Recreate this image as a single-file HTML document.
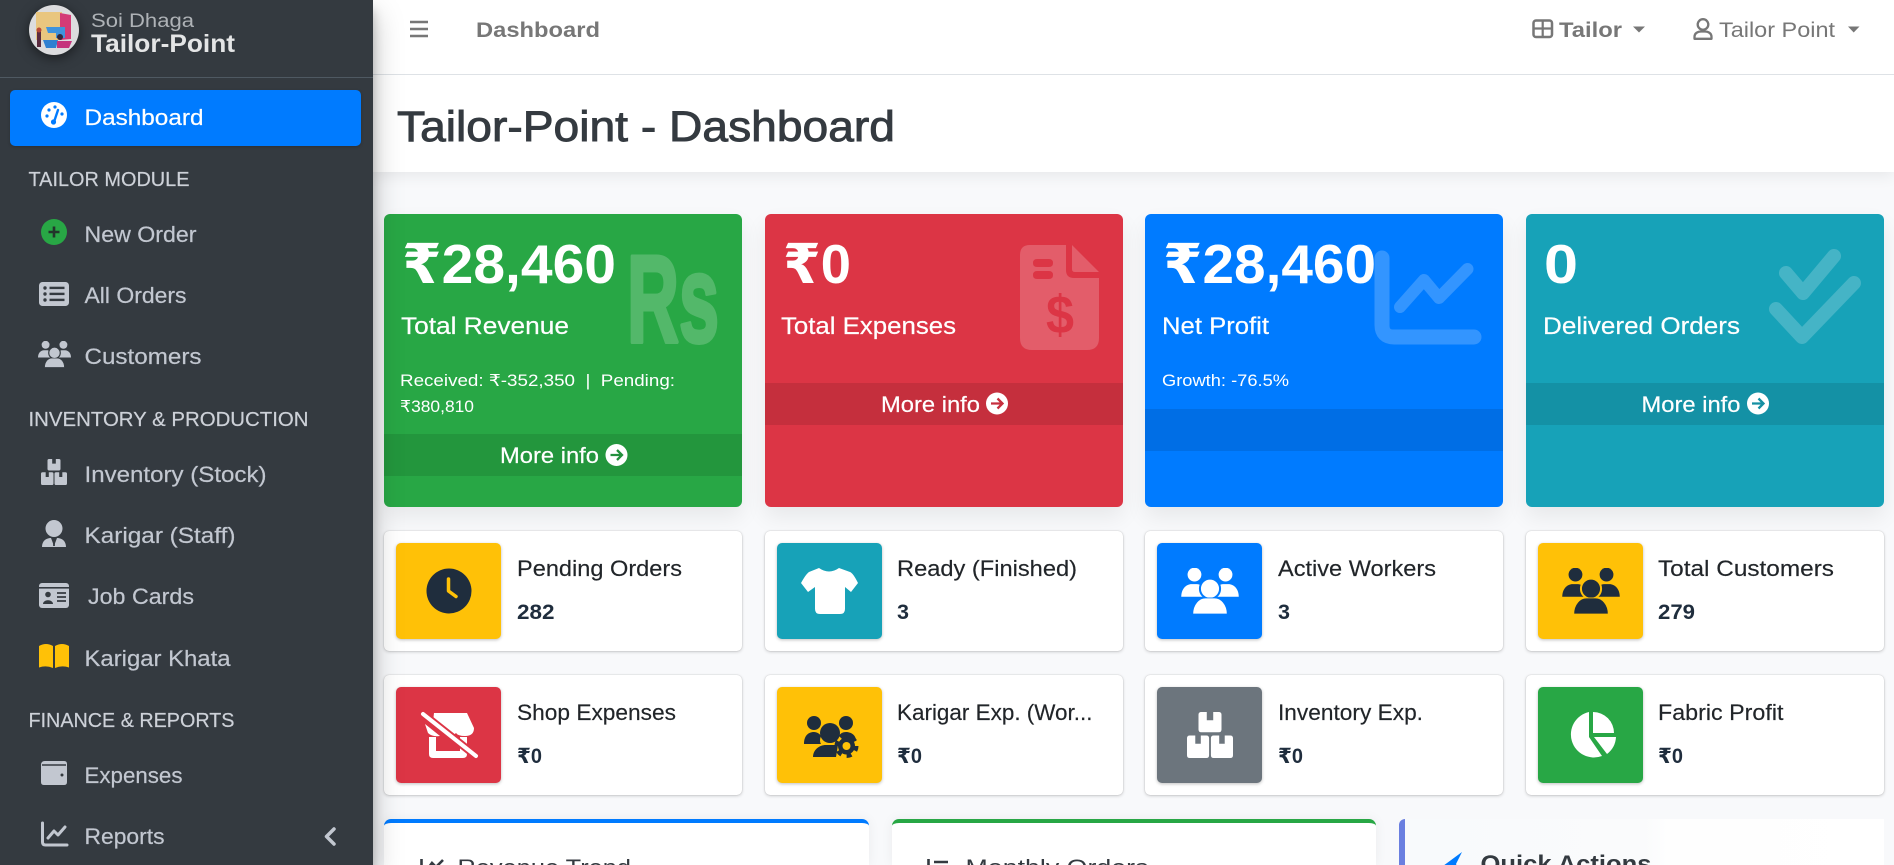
<!DOCTYPE html>
<html lang="en">
<head>
<meta charset="utf-8">
<title>Tailor-Point - Dashboard</title>
<style>
html,body{margin:0;padding:0;width:1894px;height:865px;overflow:hidden;background:#f8f9fb;font-family:"Liberation Sans",sans-serif}
#app{position:relative;width:1894px;height:865px;overflow:hidden;background:#f8f9fb}
.abs{position:absolute}
#side{left:0;top:0;width:373px;height:865px;background:#343a40;box-shadow:0 14px 28px rgba(0,0,0,.25),0 10px 10px rgba(0,0,0,.22);z-index:3}
#side .line{position:absolute;left:0;top:77px;width:373px;height:1px;background:#4f5962}
#side .active{position:absolute;left:10px;top:90px;width:351px;height:56px;border-radius:5px;background:#007bff;box-shadow:0 1px 3px rgba(0,0,0,.2)}
#nav{left:373px;top:0;width:1521px;height:74px;background:#fff;border-bottom:1px solid #dee2e6;z-index:2}
#head{left:373px;top:75px;width:1521px;height:97px;background:#fff;box-shadow:0 4px 14px rgba(0,0,0,.07);z-index:1}
.card{top:214px;height:293px;width:358px;border-radius:6px;box-shadow:0 10px 22px rgba(0,0,0,.07);overflow:hidden}
.band{position:absolute;left:0;width:100%;height:42px;background:rgba(0,0,0,.1)}
.info{width:358px;height:120px;background:#fff;border-radius:5px;box-shadow:0 0 1px rgba(0,0,0,.25),0 1px 3px rgba(0,0,0,.18)}
.tile{width:105px;height:96px;border-radius:5px;box-shadow:0 1px 3px rgba(0,0,0,.25)}
.panel{top:819px;height:42px;background:#fff;border-radius:7px 7px 0 0;box-shadow:0 0 12px rgba(0,0,0,.06)}
#over{position:absolute;left:0;top:0;z-index:5}
text{font-family:"Liberation Sans","DejaVu Sans",sans-serif}
.s{font-size:22px;fill:#c2c7d0;stroke:#c2c7d0;stroke-width:.2}
.h{font-size:20.5px;fill:#cdd1d8;stroke:#cdd1d8;stroke-width:.2}
.val{font-size:55px;font-weight:700;fill:#fff}
.ttl{font-size:24px;fill:#fff;stroke:#fff;stroke-width:.2}
.sm{font-size:16.5px;fill:#fff}
.mi{font-size:22px;fill:#fff;stroke:#fff;stroke-width:.2}
.lab{font-size:22px;fill:#212529;stroke:#212529;stroke-width:.15}
.num{font-size:21px;font-weight:700;fill:#1f2d3d}
.n{font-size:21.5px;fill:#777}
</style>
</head>
<body>
<div id="app">
<aside id="side" class="abs"><div class="line"></div><div class="active"></div></aside>
<header id="nav" class="abs"></header>
<div id="head" class="abs"></div>

<div class="abs card" style="left:384px;background:#28a745"><div class="band" style="top:220px"></div></div>
<div class="abs card" style="left:765px;background:#dc3545"><div class="band" style="top:169px"></div></div>
<div class="abs card" style="left:1145px;background:#007bff"><div class="band" style="top:195px"></div></div>
<div class="abs card" style="left:1526px;background:#17a2b8"><div class="band" style="top:169px"></div></div>

<div class="abs info" style="left:384px;top:531px"></div>
<div class="abs info" style="left:765px;top:531px"></div>
<div class="abs info" style="left:1145px;top:531px"></div>
<div class="abs info" style="left:1526px;top:531px"></div>
<div class="abs info" style="left:384px;top:675px"></div>
<div class="abs info" style="left:765px;top:675px"></div>
<div class="abs info" style="left:1145px;top:675px"></div>
<div class="abs info" style="left:1526px;top:675px"></div>

<div class="abs tile" style="left:396px;top:543px;background:#ffc107"></div>
<div class="abs tile" style="left:777px;top:543px;background:#17a2b8"></div>
<div class="abs tile" style="left:1157px;top:543px;background:#007bff"></div>
<div class="abs tile" style="left:1538px;top:543px;background:#ffc107"></div>
<div class="abs tile" style="left:396px;top:687px;background:#dc3545"></div>
<div class="abs tile" style="left:777px;top:687px;background:#ffc107"></div>
<div class="abs tile" style="left:1157px;top:687px;background:#6c757d"></div>
<div class="abs tile" style="left:1538px;top:687px;background:#28a745"></div>

<div class="abs panel" style="left:384px;width:485px;border-top:4px solid #007bff"></div>
<div class="abs panel" style="left:892px;width:484px;border-top:4px solid #28a745"></div>
<div class="abs panel" style="left:1399px;width:479px;height:46px;border-left:6px solid #6a7fe0;border-radius:6px 0 0 0;background:linear-gradient(90deg,#f8fafc 0%,#fafbfc 50%,#fefefe 55%,#fff 100%);box-shadow:none"></div>

<svg id="over" width="1894" height="865" viewBox="0 0 1894 865" xmlns="http://www.w3.org/2000/svg">
<defs>
<symbol id="users" viewBox="0 0 100 80">
  <circle cx="23" cy="11.500" r="12"/><circle cx="77" cy="11.500" r="12"/>
  <path d="M0 50C0 36 9 28 18 28H27C33 28 37 32 38 38V50Z"/><path d="M62 50V38C63 32 67 28 73 28H82C91 28 100 36 100 50Z"/>
  <circle cx="50" cy="36" r="17.500" style="stroke:var(--g);stroke-width:3.500"/>
  <path d="M20 80C20 63 31 52 42 52H58C69 52 80 63 80 80Z" style="stroke:var(--g);stroke-width:1.500"/>
</symbol>
<symbol id="boxes" viewBox="0 0 100 100">
  <path fill-rule="evenodd" d="M31 0H43V18H57V0H69Q75 0 75 6V38Q75 44 69 44H31Q25 44 25 38V6Q25 0 31 0Z"/>
  <path fill-rule="evenodd" d="M6 51H18V69H30V51H42Q48 51 48 57V94Q48 100 42 100H6Q0 100 0 94V57Q0 51 6 51Z"/>
  <path fill-rule="evenodd" d="M58 51H70V69H82V51H94Q100 51 100 57V94Q100 100 94 100H58Q52 100 52 94V57Q52 51 58 51Z"/>
</symbol>
</defs>

<!-- Sidebar brand -->
<circle cx="54" cy="30" r="25" fill="#dcdcde" style="filter:drop-shadow(0 3px 6px rgba(0,0,0,.5))"/>
<rect x="36" y="12" width="26" height="28" fill="#e9c67f"/>
<path d="M60 13L71 15V39L60 40Z" fill="#d43a76"/>
<path d="M46 27H65V38H56V33H48Z" fill="#3f93dc"/>
<path d="M43 40H58L56 48H46Z" fill="#2f80d2"/>
<path d="M57 41H72L69 48H57Z" fill="#c5347c"/>
<rect x="37" y="31" width="4" height="16" fill="#5b2b3f"/>
<circle cx="39" cy="30" r="2.500" fill="#b84a38"/>
<circle cx="60" cy="37" r="3" fill="#34283c"/>
<text x="91" y="27" font-size="19" fill="#aeb2b6" textLength="103" lengthAdjust="spacingAndGlyphs">Soi Dhaga</text>
<text x="91" y="52" font-size="25" font-weight="700" fill="#e4e5e6" textLength="144" lengthAdjust="spacingAndGlyphs">Tailor-Point</text>

<!-- Dashboard item -->
<circle cx="54" cy="115" r="13" fill="#fff"/>
<g fill="#007bff"><circle cx="47" cy="116" r="1.600"/><circle cx="49" cy="110" r="1.600"/><circle cx="55" cy="107" r="1.600"/><circle cx="62" cy="114" r="1.600"/></g>
<path d="M54 122L58 110" stroke="#007bff" stroke-width="2.400" stroke-linecap="round"/><circle cx="53.500" cy="122" r="2.600" fill="#007bff"/>
<text x="84.500" y="125" font-size="22" fill="#fff" stroke="#fff" stroke-width=".2" textLength="119" lengthAdjust="spacingAndGlyphs">Dashboard</text>

<text x="28.500" y="186" class="h" textLength="161" lengthAdjust="spacingAndGlyphs">TAILOR MODULE</text>
<circle cx="54" cy="232" r="13" fill="#28a745"/><path d="M54 226.500V237.500M48.500 232H59.500" stroke="#23352b" stroke-width="2.600"/>
<text x="84.500" y="242" class="s" textLength="112" lengthAdjust="spacingAndGlyphs">New Order</text>

<rect x="39" y="282" width="30" height="24" rx="3.500" fill="#c2c7d0"/>
<g fill="#343a40"><circle cx="45" cy="288" r="1.700"/><circle cx="45" cy="294" r="1.700"/><circle cx="45" cy="300" r="1.700"/><rect x="49.500" y="286.700" width="15" height="2.400"/><rect x="49.500" y="292.700" width="15" height="2.400"/><rect x="49.500" y="298.700" width="15" height="2.400"/></g>
<text x="84.500" y="303" class="s" textLength="102" lengthAdjust="spacingAndGlyphs">All Orders</text>

<use href="#users" x="38" y="341" width="33" height="26.400" fill="#c2c7d0" style="--g:#343a40"/>
<text x="84.500" y="364" class="s" textLength="117" lengthAdjust="spacingAndGlyphs">Customers</text>

<text x="28.500" y="426" class="h" textLength="280" lengthAdjust="spacingAndGlyphs">INVENTORY &amp; PRODUCTION</text>
<use href="#boxes" x="39" y="459" width="30" height="26" preserveAspectRatio="none" fill="#c2c7d0"/>
<text x="84.500" y="482" class="s" textLength="182" lengthAdjust="spacingAndGlyphs">Inventory (Stock)</text>

<circle cx="54" cy="528.500" r="8.500" fill="#c2c7d0"/>
<path d="M42 547C42 541 46 538 51 538L54 546L57 538C62 538 66 541 66 547Z" fill="#c2c7d0"/>
<path d="M54 539V546" stroke="#343a40" stroke-width="1.800"/>
<text x="84.500" y="543" class="s" textLength="151" lengthAdjust="spacingAndGlyphs">Karigar (Staff)</text>

<rect x="39" y="583" width="30" height="25" rx="3" fill="#c2c7d0"/>
<rect x="39" y="587" width="30" height="1.600" fill="#343a40"/>
<circle cx="48" cy="594.500" r="2.800" fill="#343a40"/><path d="M43 604C43 599 53 599 53 604Z" fill="#343a40"/>
<path d="M57 593H66M57 597H66M57 601H66" stroke="#343a40" stroke-width="1.800"/>
<text x="88" y="604" class="s" textLength="106" lengthAdjust="spacingAndGlyphs">Job Cards</text>

<path d="M39 646Q46 642 53 646V668Q46 665 39 667.500Z" fill="#ffc107"/><path d="M55 646Q62 642 69 646V667.500Q62 665 55 668Z" fill="#ffc107"/>
<text x="84.500" y="666" class="s" textLength="146" lengthAdjust="spacingAndGlyphs">Karigar Khata</text>

<text x="28.500" y="727" class="h" textLength="206" lengthAdjust="spacingAndGlyphs">FINANCE &amp; REPORTS</text>
<path d="M45 761H64Q67 761 67 764V782Q67 785 64 785H44Q41 785 41 782V765Q41 761 45 761Z" fill="#c2c7d0"/>
<path d="M42 765H66" stroke="#343a40" stroke-width="1.500"/><circle cx="62" cy="775" r="1.500" fill="#343a40"/>
<text x="84.500" y="783" class="s" textLength="98" lengthAdjust="spacingAndGlyphs">Expenses</text>

<path d="M42.500 823V842Q42.500 845 45.500 845H67" fill="none" stroke="#c2c7d0" stroke-width="3" stroke-linecap="round"/>
<path d="M48 838L54 831L58 835L65 827" fill="none" stroke="#c2c7d0" stroke-width="3" stroke-linecap="round" stroke-linejoin="round"/>
<text x="84.500" y="844" class="s" textLength="80" lengthAdjust="spacingAndGlyphs">Reports</text>
<path d="M334 829L326.500 836.500L334 844" fill="none" stroke="#c2c7d0" stroke-width="3.500" stroke-linecap="round" stroke-linejoin="round"/>

<!-- Navbar -->
<path d="M410 22H428M410 29H428M410 36H428" stroke="#777" stroke-width="2.600"/>
<text x="476" y="37" font-size="21.500" font-weight="700" fill="#777" textLength="124" lengthAdjust="spacingAndGlyphs">Dashboard</text>
<rect x="1533.500" y="20.500" width="18.500" height="16.500" rx="2.500" fill="none" stroke="#777" stroke-width="2.500"/>
<path d="M1533 28.500H1552M1542.700 20V37" stroke="#777" stroke-width="2.200"/>
<text x="1559" y="37" font-size="21.500" font-weight="700" fill="#777" textLength="63" lengthAdjust="spacingAndGlyphs">Tailor</text>
<path d="M1633 26.500H1645L1639 32.500Z" fill="#777"/>
<circle cx="1703" cy="24.500" r="5.300" fill="none" stroke="#777" stroke-width="2.300"/>
<path d="M1694.500 38.800V37C1694.500 33 1698 31.500 1701 31.500H1705C1708 31.500 1711.500 33 1711.500 37V38.800Z" fill="none" stroke="#777" stroke-width="2.300" stroke-linejoin="round"/>
<text x="1719" y="37" class="n" textLength="116" lengthAdjust="spacingAndGlyphs">Tailor Point</text>
<path d="M1848 26.500H1859.500L1853.700 32.500Z" fill="#777"/>

<text x="397" y="141" font-size="43" fill="#343a40" stroke="#343a40" stroke-width=".9" textLength="498" lengthAdjust="spacingAndGlyphs">Tailor-Point - Dashboard</text>

<!-- Card watermark icons -->
<g opacity=".2"><text x="627" y="342" font-size="124" font-weight="700" fill="#fff" stroke="#fff" stroke-width="4" stroke-linejoin="round" textLength="92" lengthAdjust="spacingAndGlyphs">Rs</text></g>
<path fill="#fff" fill-opacity=".2" fill-rule="evenodd" d="M1030 245H1066V270Q1066 278 1074 278H1099V338Q1099 350 1087 350H1032Q1020 350 1020 338V255Q1020 245 1030 245ZM1037 259Q1033 259 1033 263Q1033 267 1037 267H1049Q1053 267 1053 263Q1053 259 1049 259ZM1037 271Q1033 271 1033 275Q1033 279 1037 279H1049Q1053 279 1053 275Q1053 271 1049 271Z"/>
<path fill="#fff" fill-opacity=".2" d="M1072 245L1099 272H1075Q1072 272 1072 269Z"/>
<text x="1060" y="333" font-size="54" font-weight="700" fill="#dc3545" text-anchor="middle" textLength="28" lengthAdjust="spacingAndGlyphs">$</text>
<path d="M1382 258V325Q1382 337 1394 337H1474" fill="none" stroke="#fff" stroke-opacity=".2" stroke-width="15" stroke-linecap="round"/>
<path d="M1400 307L1424 280L1439 298L1467.500 269" fill="none" stroke="#fff" stroke-opacity=".2" stroke-width="12" stroke-linecap="round" stroke-linejoin="round"/>
<path d="M1786 273L1803 293L1834 256" fill="none" stroke="#fff" stroke-opacity=".2" stroke-width="14" stroke-linecap="round" stroke-linejoin="round"/>
<path d="M1776 309L1802 337L1854 283" fill="none" stroke="#fff" stroke-opacity=".2" stroke-width="14" stroke-linecap="round" stroke-linejoin="round"/>

<!-- Card text -->
<text x="402" y="283" class="val" textLength="214" lengthAdjust="spacingAndGlyphs">₹28,460</text>
<text x="401" y="334" class="ttl" textLength="168" lengthAdjust="spacingAndGlyphs">Total Revenue</text>
<text x="400" y="386" class="sm" textLength="275" lengthAdjust="spacingAndGlyphs">Received: ₹-352,350 &#160;|&#160; Pending:</text>
<text x="400" y="412" class="sm" textLength="74" lengthAdjust="spacingAndGlyphs">₹380,810</text>
<text x="500" y="463" class="mi" textLength="99" lengthAdjust="spacingAndGlyphs">More info</text>
<circle cx="616.500" cy="455" r="11" fill="#fff"/>
<path d="M610.500 455H621.500M617 450L622 455L617 460" fill="none" stroke="#23903d" stroke-width="2.300"/>

<text x="783" y="283" class="val" textLength="68" lengthAdjust="spacingAndGlyphs">₹0</text>
<text x="781" y="334" class="ttl" textLength="175" lengthAdjust="spacingAndGlyphs">Total Expenses</text>
<text x="881" y="412" class="mi" textLength="99" lengthAdjust="spacingAndGlyphs">More info</text>
<circle cx="997" cy="403.500" r="11" fill="#fff"/>
<path d="M991 403.500H1002M997.500 398.500L1002.500 403.500L997.500 408.500" fill="none" stroke="#c62f3e" stroke-width="2.300"/>

<text x="1163" y="283" class="val" textLength="213" lengthAdjust="spacingAndGlyphs">₹28,460</text>
<text x="1162" y="334" class="ttl" textLength="107" lengthAdjust="spacingAndGlyphs">Net Profit</text>
<text x="1162" y="386" class="sm" textLength="127" lengthAdjust="spacingAndGlyphs">Growth: -76.5%</text>

<text x="1544" y="283" class="val" textLength="34" lengthAdjust="spacingAndGlyphs">0</text>
<text x="1543" y="334" class="ttl" textLength="197" lengthAdjust="spacingAndGlyphs">Delivered Orders</text>
<text x="1641.500" y="412" class="mi" textLength="99" lengthAdjust="spacingAndGlyphs">More info</text>
<circle cx="1758" cy="403.500" r="11" fill="#fff"/>
<path d="M1752 403.500H1763M1758.500 398.500L1763.500 403.500L1758.500 408.500" fill="none" stroke="#158fa2" stroke-width="2.300"/>

<!-- Info icons row 1 -->
<circle cx="449" cy="591" r="22.500" fill="#1f2d3d"/>
<path d="M448.500 579V591L456 596.500" fill="none" stroke="#ffc107" stroke-width="3.500" stroke-linecap="round" stroke-linejoin="round"/>
<path fill="#fff" d="M819 568Q829 575 839 568L850 572Q853 573 858 583L851 592L845 587V609Q845 614 840 614H820Q815 614 815 609V587L808 592L801 583Q806 574 809 572Z"/>
<use href="#users" x="1181" y="568" width="58" height="46" fill="#fff" style="--g:#007bff"/>
<use href="#users" x="1562" y="568" width="58" height="46" fill="#1f2d3d" style="--g:#ffc107"/>

<text x="517" y="576" class="lab" textLength="165" lengthAdjust="spacingAndGlyphs">Pending Orders</text>
<text x="517" y="619" class="num" textLength="37.500" lengthAdjust="spacingAndGlyphs">282</text>
<text x="897" y="576" class="lab" textLength="180" lengthAdjust="spacingAndGlyphs">Ready (Finished)</text>
<text x="897" y="619" class="num" textLength="12" lengthAdjust="spacingAndGlyphs">3</text>
<text x="1278" y="576" class="lab" textLength="158" lengthAdjust="spacingAndGlyphs">Active Workers</text>
<text x="1278" y="619" class="num" textLength="12" lengthAdjust="spacingAndGlyphs">3</text>
<text x="1658" y="576" class="lab" textLength="176" lengthAdjust="spacingAndGlyphs">Total Customers</text>
<text x="1658" y="619" class="num" textLength="37" lengthAdjust="spacingAndGlyphs">279</text>

<!-- Info icons row 2 -->
<path fill="#fff" d="M434 713H467L474 728Q474 736 465 736Q458 736 456 733Q452 737 447 735L434 724Q433 720 434 713ZM425 724L440 736Q432 737 428 733Z"/>
<path fill="#fff" fill-rule="evenodd" d="M429 737H436V751H460V737H467V754Q467 758 463 758H433Q429 758 429 754Z"/>
<path d="M423 714L476 756" stroke="#dc3545" stroke-width="8"/>
<path d="M423 714L476 756" stroke="#fff" stroke-width="4" stroke-linecap="round"/>

<g fill="#1f2d3d">
<circle cx="814" cy="723" r="7"/><circle cx="846" cy="723" r="7"/><circle cx="830" cy="733" r="10"/>
<path d="M804 744C804 735 809 732 814 732C817 732 820 734 821 736Q819 741 821 744Z"/>
<path d="M839 736Q841 732 846 732C851 732 856 735 856 741L845 742Z"/>
<path d="M813 757C813 750 819 745 826 745H838L836 757Z"/>
</g>
<circle cx="846.500" cy="746" r="8.500" fill="#1f2d3d"/>
<circle cx="846.500" cy="746" r="10" fill="none" stroke="#1f2d3d" stroke-width="4" stroke-dasharray="5 5.470"/>
<circle cx="846.500" cy="746" r="4" fill="#ffc107"/>

<use href="#boxes" x="1184" y="712" width="52" height="46" preserveAspectRatio="none" fill="#fff"/>

<g fill="#fff">
<path d="M1589 712A23 23 0 1 0 1602 756L1589 737Z"/>
<path d="M1593 712A21 21 0 0 1 1614 733H1593Z"/>
<path d="M1594 737H1616A23 23 0 0 1 1607 754Z"/>
</g>

<text x="517" y="720" class="lab" textLength="159" lengthAdjust="spacingAndGlyphs">Shop Expenses</text>
<text x="517" y="763" class="num" textLength="25" lengthAdjust="spacingAndGlyphs">₹0</text>
<text x="897" y="720" class="lab" textLength="195.500" lengthAdjust="spacingAndGlyphs">Karigar Exp. (Wor...</text>
<text x="897" y="763" class="num" textLength="25" lengthAdjust="spacingAndGlyphs">₹0</text>
<text x="1278" y="720" class="lab" textLength="145" lengthAdjust="spacingAndGlyphs">Inventory Exp.</text>
<text x="1278" y="763" class="num" textLength="25" lengthAdjust="spacingAndGlyphs">₹0</text>
<text x="1658" y="720" class="lab" textLength="125.500" lengthAdjust="spacingAndGlyphs">Fabric Profit</text>
<text x="1658" y="763" class="num" textLength="25" lengthAdjust="spacingAndGlyphs">₹0</text>

<!-- Bottom panels -->
<path d="M421.500 859V880H445M426 871L432 863L436 867L443 860" fill="none" stroke="#343a40" stroke-width="2.600"/>
<text x="457.500" y="875" font-size="22" fill="#343a40" textLength="173.500" lengthAdjust="spacingAndGlyphs">Revenue Trend</text>
<path d="M928.500 859V880M934 862H948M934 869H944" fill="none" stroke="#343a40" stroke-width="2.600"/>
<text x="965.500" y="875" font-size="22" fill="#343a40" textLength="183" lengthAdjust="spacingAndGlyphs">Monthly Orders</text>
<path d="M1462 852L1443 866V880H1463L1456 864Z" fill="#007bff"/>
<text x="1480.500" y="872" font-size="24" font-weight="700" fill="#343a40" textLength="171" lengthAdjust="spacingAndGlyphs">Quick Actions</text>
</svg>
</div>
</body>
</html>
